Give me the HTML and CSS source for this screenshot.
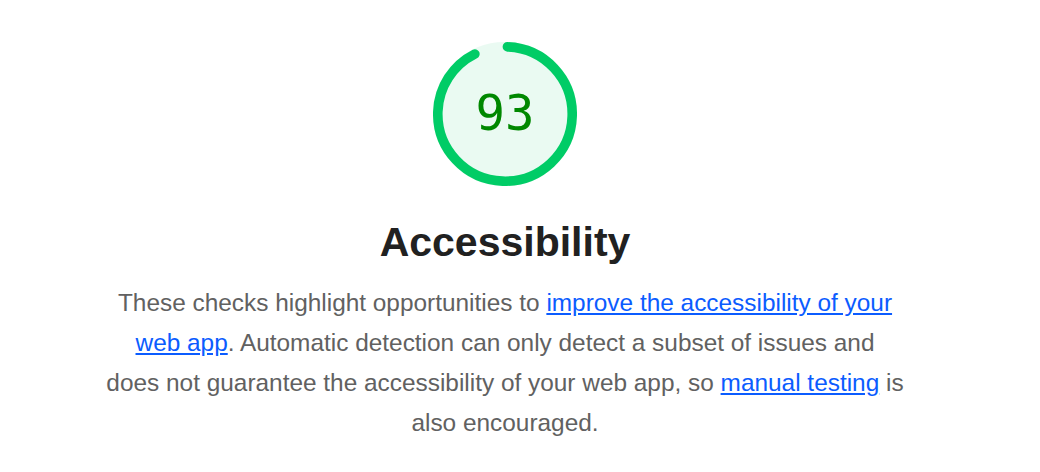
FILE: index.html
```html
<!DOCTYPE html>
<html lang="en">
<head>
<meta charset="utf-8">
<title>Accessibility</title>
<link rel="stylesheet" href="styles.css">
</head>
<body>
<div class="category">
  <div class="gauge">
    <svg class="gauge-svg" viewBox="0 0 120 120" width="144" height="144">
      <circle class="gauge-base" cx="60" cy="60" r="56" stroke-width="8"></circle>
      <circle class="gauge-arc" cx="60" cy="60" r="56" stroke-width="8" stroke-dasharray="323.23 351.86"></circle>
    </svg>
    <div class="gauge-percentage">93</div>
  </div>
  <h2 class="title">Accessibility</h2>
  <p class="description">These checks highlight opportunities to <a href="#">improve the accessibility of your web app</a>. Automatic detection can only detect a subset of issues and does&nbsp;not guarantee the accessibility of your web app, so <a href="#">manual testing</a> is also encouraged.</p>
</div>
</body>
</html>
```
FILE: styles.css
```css
html, body {
  margin: 0;
  padding: 0;
  background: #ffffff;
}

.category {
  display: flex;
  flex-direction: column;
  align-items: center;
  padding-top: 42px;
  padding-right: 30px;
  font-family: "Liberation Sans", Arial, sans-serif;
}

.gauge {
  position: relative;
  width: 144px;
  height: 144px;
}

.gauge-svg {
  display: block;
  width: 144px;
  height: 144px;
}

.gauge-base {
  fill: #00cc66;
  stroke: #00cc66;
  opacity: 0.08;
}

.gauge-arc {
  fill: none;
  stroke: #00cc66;
  stroke-linecap: round;
  transform-origin: 50% 50%;
  transform: rotate(-87.95deg);
}

.gauge-percentage {
  position: absolute;
  inset: 0;
  display: flex;
  align-items: center;
  justify-content: center;
  padding-bottom: 2px;
  font-family: "DejaVu Sans Mono", monospace;
  font-size: 49px;
  color: #008800;
}

.title {
  margin: 32px 0 0;
  font-size: 41px;
  line-height: 48px;
  font-weight: bold;
  color: #212121;
}

.description {
  margin: 17px 0 0;
  max-width: 804px;
  text-align: center;
  font-size: 24.4px;
  line-height: 40px;
  color: #616161;
}

.description a {
  color: #0b5cff;
  text-decoration: underline;
}
```
